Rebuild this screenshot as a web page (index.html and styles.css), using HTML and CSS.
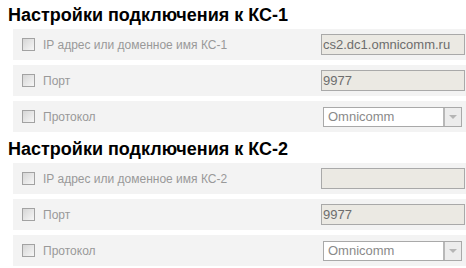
FILE: index.html
```html
<!DOCTYPE html>
<html>
<head>
<meta charset="utf-8">
<link rel="stylesheet" href="styles.css">
</head>
<body>
<section class="group">
  <h2 class="title">Настройки подключения к КС-1</h2>
  <div class="row">
    <label class="lbl"><span class="cb"></span>IP адрес или доменное имя КС-1</label>
    <div class="field">cs2.dc1.omnicomm.ru</div>
  </div>
  <div class="row">
    <label class="lbl"><span class="cb"></span>Порт</label>
    <div class="field">9977</div>
  </div>
  <div class="row">
    <label class="lbl"><span class="cb"></span>Протокол</label>
    <div class="select"><span class="sel-text">Omnicomm</span><span class="sel-btn"><svg width="8" height="4" viewBox="0 0 8 4"><path d="M0 0h8L4 4z" fill="#b5b5b5"/></svg></span></div>
  </div>
</section>
<section class="group">
  <h2 class="title">Настройки подключения к КС-2</h2>
  <div class="row">
    <label class="lbl"><span class="cb"></span>IP адрес или доменное имя КС-2</label>
    <div class="field"></div>
  </div>
  <div class="row">
    <label class="lbl"><span class="cb"></span>Порт</label>
    <div class="field">9977</div>
  </div>
  <div class="row">
    <label class="lbl"><span class="cb"></span>Протокол</label>
    <div class="select"><span class="sel-text">Omnicomm</span><span class="sel-btn"><svg width="8" height="4" viewBox="0 0 8 4"><path d="M0 0h8L4 4z" fill="#b5b5b5"/></svg></span></div>
  </div>
</section>
</body>
</html>
```
FILE: styles.css
```css
html, body {
  margin: 0;
  padding: 0;
  background: #ffffff;
  font-family: "Liberation Sans", Arial, sans-serif;
}
.group {
  display: flex;
  flex-direction: column;
  gap: 5px;
  margin-bottom: 2px;
}
.title {
  margin: 0;
  height: 24px;
  padding-left: 8px;
  font-size: 18px;
  font-weight: bold;
  color: #000;
  line-height: 30px;
}
.row {
  margin-left: 13px;
  height: 31px;
  background: #f3f3f3;
  display: flex;
  align-items: center;
  justify-content: space-between;
}
.lbl {
  display: flex;
  align-items: center;
  padding-left: 9px;
  font-size: 12px;
  color: #999999;
}
.cb {
  width: 11px;
  height: 11px;
  border: 1px solid #a2a2a2;
  background: linear-gradient(135deg, #d6d6d6, #f7f7f7);
  margin-right: 8px;
  box-sizing: content-box;
}
.field {
  width: 141px;
  height: 19px;
  margin-right: 1px;
  border: 1px solid #a9a9a9;
  background: #ebe9e3;
  color: #6d6d6d;
  font-size: 13px;
  line-height: 19px;
  padding-left: 1px;
  box-sizing: content-box;
  overflow: hidden;
  white-space: nowrap;
}
.select {
  width: 137px;
  height: 18px;
  margin-right: 4px;
  border: 1px solid #a9a9a9;
  background: #fff;
  display: flex;
  align-items: stretch;
  box-sizing: content-box;
}
.sel-text {
  flex: 1;
  color: #8a8a8a;
  font-size: 13px;
  line-height: 18px;
  padding-left: 4px;
}
.sel-btn {
  width: 16px;
  border-left: 2px solid #b8b8b8;
  background: #ececec;
  display: flex;
  align-items: center;
  justify-content: center;
}
```
